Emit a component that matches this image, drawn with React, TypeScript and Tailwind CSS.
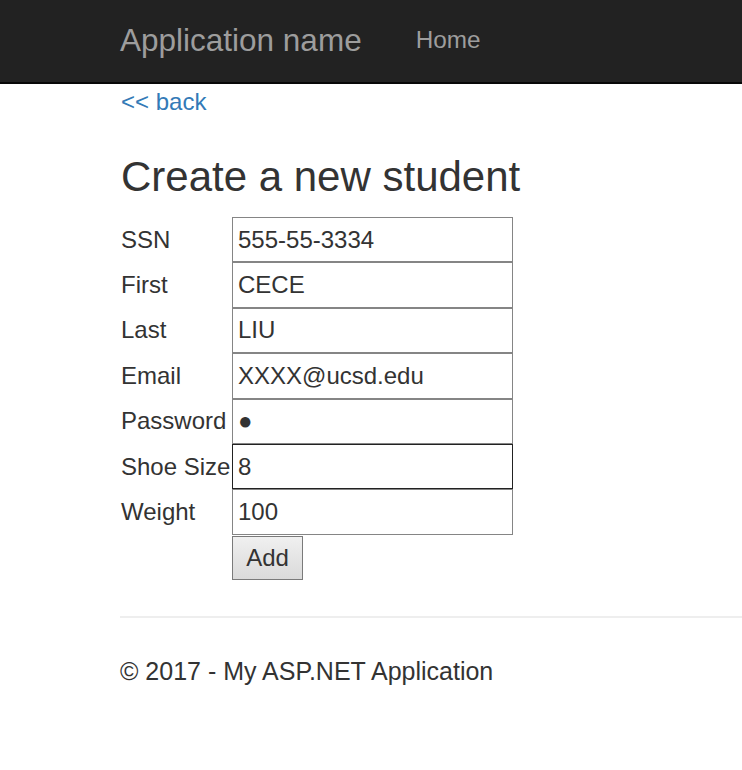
import React from "react";

const fields: [string, string, boolean?][] = [
  ["SSN", "555-55-3334"],
  ["First", "CECE"],
  ["Last", "LIU"],
  ["Email", "XXXX@ucsd.edu"],
  ["Password", "●"],
  ["Shoe Size", "8", true],
  ["Weight", "100"],
];

export default function App() {
  return (
    <div className="min-h-[770px] bg-white text-[#333] font-['Liberation_Sans',Arial,sans-serif]">
      <nav className="h-[84px] bg-[#222] border-b-2 border-[#080808] flex items-center pl-[120px]">
        <span className="text-[31.5px] leading-none text-[#9d9d9d]">Application name</span>
        <span className="ml-[54px] text-[24.3px] leading-none text-[#9d9d9d] -mt-[2px]">Home</span>
      </nav>
      <div className="pl-[120px]">
        <div className="h-[34px] flex items-center">
          <a className="text-[24px] leading-none text-[#337ab7] ml-[1px] mt-[1px]">&lt;&lt; back</a>
        </div>
        <h2 className="text-[42px] leading-none mt-[38px] h-[61px] ml-[1px]">Create a new student</h2>
        <div className="flex flex-col">
          {fields.map(([label, value, focus]) => (
            <div key={label} className="flex items-center h-[45.4px]">
              <div className="w-[112px] text-[24px] leading-none pl-[1px] whitespace-nowrap">{label}</div>
              <div
                className={
                  "w-[281px] h-full flex items-center pl-[5px] text-[24px] leading-none bg-white border-[1.7px] " +
                  (focus ? "border-[#222]" : "border-[#858585]")
                }
              >
                {value}
              </div>
            </div>
          ))}
          <div className="flex h-[45px] items-center">
            <div className="w-[112px]" />
            <button className="w-[71px] h-[44px] mt-[1px] text-[24px] leading-none border-[1.7px] border-[#7a7a7a] bg-gradient-to-b from-[#f0f0f0] to-[#dadada]">
              Add
            </button>
          </div>
        </div>
        <hr className="mt-[36px] border-0 h-[2px] bg-[#eee]" />
        <div className="mt-[41px] text-[25px] leading-none">© 2017 - My ASP.NET Application</div>
      </div>
    </div>
  );
}
